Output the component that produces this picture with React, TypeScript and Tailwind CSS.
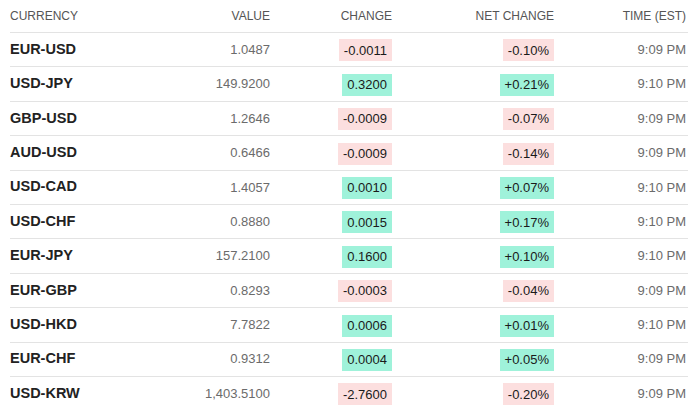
import React from "react";

interface Row {
  pair: string;
  value: string;
  change: string;
  net: string;
  time: string;
}

const rows: Row[] = [
  { pair: "EUR-USD", value: "1.0487", change: "-0.0011", net: "-0.10%", time: "9:09 PM" },
  { pair: "USD-JPY", value: "149.9200", change: "0.3200", net: "+0.21%", time: "9:10 PM" },
  { pair: "GBP-USD", value: "1.2646", change: "-0.0009", net: "-0.07%", time: "9:09 PM" },
  { pair: "AUD-USD", value: "0.6466", change: "-0.0009", net: "-0.14%", time: "9:09 PM" },
  { pair: "USD-CAD", value: "1.4057", change: "0.0010", net: "+0.07%", time: "9:10 PM" },
  { pair: "USD-CHF", value: "0.8880", change: "0.0015", net: "+0.17%", time: "9:10 PM" },
  { pair: "EUR-JPY", value: "157.2100", change: "0.1600", net: "+0.10%", time: "9:10 PM" },
  { pair: "EUR-GBP", value: "0.8293", change: "-0.0003", net: "-0.04%", time: "9:09 PM" },
  { pair: "USD-HKD", value: "7.7822", change: "0.0006", net: "+0.01%", time: "9:10 PM" },
  { pair: "EUR-CHF", value: "0.9312", change: "0.0004", net: "+0.05%", time: "9:09 PM" },
  { pair: "USD-KRW", value: "1,403.5100", change: "-2.7600", net: "-0.20%", time: "9:09 PM" },
];

const Badge = ({ text }: { text: string }) => {
  const down = text.startsWith("-");
  return (
    <span
      className={
        "inline-flex h-[22px] items-center px-[5px] text-[13px] text-[#1a1a1a] " +
        (down ? "bg-[#fcdfdf]" : "bg-[#9ff2da]")
      }
    >
      {text}
    </span>
  );
};

const cols = "grid grid-cols-[140px_120px_122px_162px_134px] items-center";

export default function App() {
  return (
    <div className="h-[408px] w-[700px] overflow-hidden bg-white pl-[10px] font-['Liberation_Sans',Arial,sans-serif]">
      <div className="w-[678px]">
        <div className={cols + " h-[33px] border-b border-[#e3e3e3] text-[12px] text-[#555]"}>
          <div>CURRENCY</div>
          <div className="text-right">VALUE</div>
          <div className="text-right">CHANGE</div>
          <div className="text-right">NET CHANGE</div>
          <div className="pr-[2px] text-right">TIME (EST)</div>
        </div>
        {rows.map((r) => (
          <div key={r.pair} className={cols + " h-[34.4px] border-b border-[#e3e3e3]"}>
            <div className="text-[14.5px] font-bold text-[#222]">{r.pair}</div>
            <div className="text-right text-[13px] text-[#6b6b6b]">{r.value}</div>
            <div className="text-right">
              <Badge text={r.change} />
            </div>
            <div className="text-right">
              <Badge text={r.net} />
            </div>
            <div className="pr-[2px] text-right text-[13px] text-[#6b6b6b]">{r.time}</div>
          </div>
        ))}
      </div>
    </div>
  );
}
